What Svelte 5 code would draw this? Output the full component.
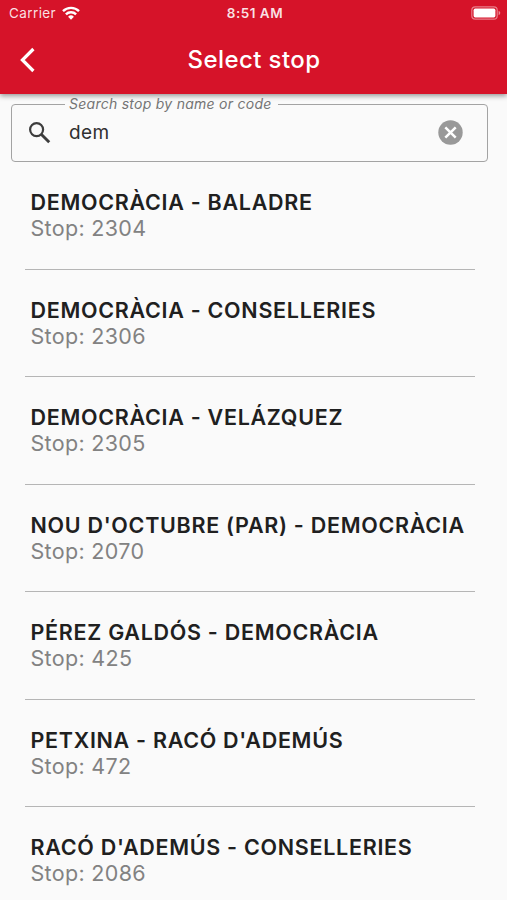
<script>
  let query = "dem";

  const stops = [
    { name: "DEMOCRÀCIA - BALADRE", code: 2304 },
    { name: "DEMOCRÀCIA - CONSELLERIES", code: 2306 },
    { name: "DEMOCRÀCIA - VELÁZQUEZ", code: 2305 },
    { name: "NOU D'OCTUBRE (PAR) - DEMOCRÀCIA", code: 2070 },
    { name: "PÉREZ GALDÓS - DEMOCRÀCIA", code: 425 },
    { name: "PETXINA - RACÓ D'ADEMÚS", code: 472 },
    { name: "RACÓ D'ADEMÚS - CONSELLERIES", code: 2086 },
  ];
</script>

<style>
  :global(body) {
    background: #fafafa;
  }

  .screen {
    height: 900px;
    overflow: hidden;
    font-family: Inter, Roboto, sans-serif;
    color: #202020;
    background: #fafafa;
  }

  header {
    height: 94px;
    color: #fff;
    background: #d61329;
    box-shadow: 0 2px 5px rgba(0, 0, 0, 0.4);
  }

  .status {
    display: grid;
    grid-template-columns: 1fr auto 1fr;
    align-items: center;
    height: 26px;
    padding: 0 6px 0 9px;
    font-size: 13.5px;
    color: rgba(255, 255, 255, 0.88);
  }

  .carrier {
    display: flex;
    align-items: center;
    gap: 6px;
    letter-spacing: 0.4px;
  }

  .time {
    font-size: 13.5px;
    font-weight: 600;
    letter-spacing: 0.5px;
  }

  .battery {
    justify-self: end;
  }

  .bar {
    display: grid;
    grid-template-columns: 61px 1fr 60px;
    align-items: center;
    height: 67px;
  }

  .back,
  .clear {
    padding: 0;
    border: 0;
    background: none;
    line-height: 0;
  }

  .back {
    justify-self: start;
    margin-left: 19px;
  }

  h1 {
    margin: 0;
    font-size: 24px;
    font-weight: 500;
    letter-spacing: 0.42px;
    text-align: center;
  }

  svg {
    display: block;
  }

  fieldset {
    height: 68px;
    box-sizing: border-box;
    margin: 0 19px 0 11px;
    padding: 0 24px 0 16px;
    border: 1px solid #a3a3a3;
    border-radius: 4px;
  }

  legend {
    height: 20px;
    margin-left: 37px;
    padding: 0 6px 0 4px;
    font-size: 14px;
    font-style: italic;
    line-height: 20px;
    letter-spacing: 0.26px;
    color: #747474;
  }

  .field {
    display: flex;
    align-items: center;
    height: 36px;
  }

  input {
    flex: 1;
    min-width: 0;
    margin-left: 18px;
    padding: 0;
    border: 0;
    outline: 0;
    background: none;
    font: 400 19px Inter, Roboto, sans-serif;
    letter-spacing: 0.4px;
    color: #303030;
  }

  ul {
    margin: 0;
    padding: 0 32px 0 25px;
    list-style: none;
  }

  li {
    height: 107.5px;
    box-sizing: border-box;
    padding: 27px 0 0 5.5px;
    border-bottom: 1px solid #b5b5b5;
    line-height: 26px;
    white-space: nowrap;
  }

  .name {
    font-size: 21.5px;
    font-weight: 600;
    letter-spacing: 0.71px;
  }

  .code {
    font-size: 21.5px;
    letter-spacing: 0.32px;
    color: #828282;
  }
</style>

<div class="screen">
  <header>
    <div class="status">
      <div class="carrier">
        <span>Carrier</span>
        <svg width="18" height="14" viewBox="0 0 18 14" fill="none" stroke="#fff" stroke-width="2.4">
          <path d="M1 5.2a11.3 11.3 0 0 1 16 0" />
          <path d="M3.9 8.3a7.2 7.2 0 0 1 10.2 0" />
          <path d="M9 13.8 6.1 10.8a4.1 4.1 0 0 1 5.8 0z" fill="#fff" stroke="none" />
        </svg>
      </div>
      <span class="time">8:51 AM</span>
      <svg class="battery" width="30" height="14" viewBox="0 0 30 14">
        <rect x="0.8" y="0.8" width="25.4" height="12.4" rx="3.4" fill="none" stroke="#fff" stroke-opacity="0.45" stroke-width="1.2" />
        <rect x="2.6" y="2.6" width="21.8" height="8.8" rx="1.6" fill="#fff" />
        <path d="M27.6 4.8c2.2.8 2.2 3.6 0 4.4z" fill="#fff" fill-opacity="0.5" />
      </svg>
    </div>
    <div class="bar">
      <button class="back" aria-label="Back">
        <svg width="18" height="26" viewBox="0 0 18 26" fill="none" stroke="#fff" stroke-width="3.2">
          <path d="M14.4 2 3.4 13l11 11" />
        </svg>
      </button>
      <h1>Select stop</h1>
    </div>
  </header>

  <fieldset>
    <legend>Search stop by name or code</legend>
    <div class="field">
      <svg width="23" height="23" viewBox="0 0 23 23" fill="none" stroke="#3d3d3d" stroke-width="2.2">
        <circle cx="8.6" cy="8.6" r="6.5" />
        <path d="m13.2 13.2 8 8" stroke-width="2.9" />
      </svg>
      <input bind:value={query} aria-label="Search stop" />
      <button class="clear" aria-label="Clear">
        <svg width="25" height="25" viewBox="0 0 25 25">
          <circle cx="12.5" cy="12.5" r="12.2" fill="#999" />
          <path d="m7.3 7.3 10.4 10.4m0-10.4-10.4 10.4" stroke="#fff" stroke-width="2.5" />
        </svg>
      </button>
    </div>
  </fieldset>

  <ul>
    {#each stops as stop}
      <li>
        <div class="name">{stop.name}</div>
        <div class="code">Stop: {stop.code}</div>
      </li>
    {/each}
  </ul>
</div>
